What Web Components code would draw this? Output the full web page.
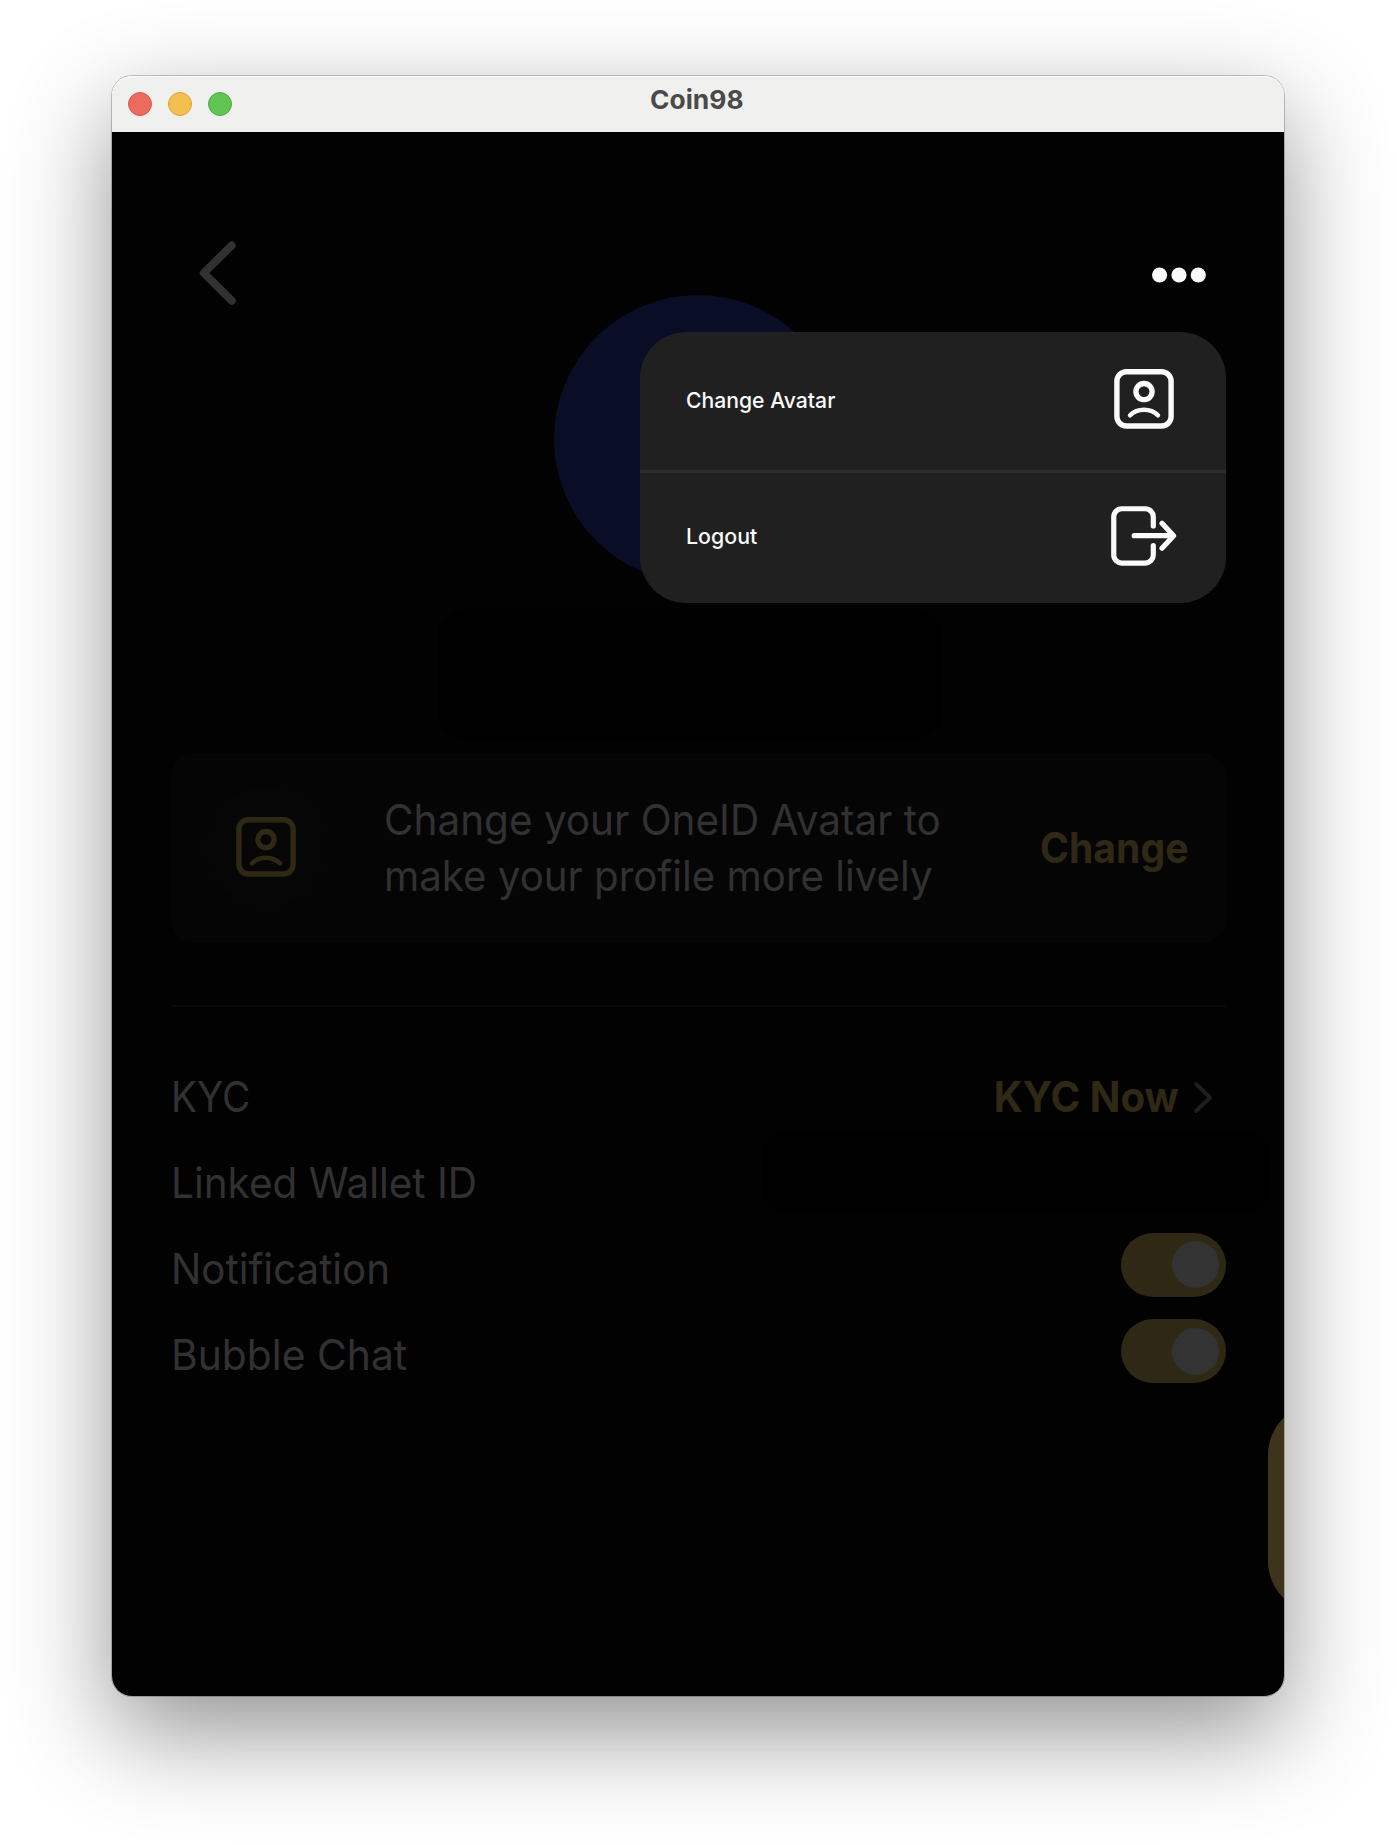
<!DOCTYPE html>
<html lang="en">
<head>
<meta charset="utf-8">
<title>Coin98</title>
<style>
html,body{margin:0;background:#fff}
body{width:1396px;height:1844px;overflow:hidden;display:flex;flex-direction:column;font-family:Inter,"Liberation Sans",sans-serif}
</style>
</head>
<body>
<app-window heading="Coin98">
  <profile-page></profile-page>
  <context-menu slot="overlay">
    <menu-entry icon="avatar"><fit-text sx=".962">Change Avatar</fit-text></menu-entry>
    <menu-entry icon="logout"><fit-text sx=".972">Logout</fit-text></menu-entry>
  </context-menu>
</app-window>
<script>
const define = (name, html, setup) => {
  const tpl = document.createElement('template');
  tpl.innerHTML = html;
  customElements.define(name, class extends HTMLElement {
    constructor() {
      super();
      this.attachShadow({mode: 'open'}).appendChild(tpl.content.cloneNode(true));
    }
    connectedCallback() { if (setup) setup(this, this.shadowRoot); }
  });
};

// name: [width, height, svg body]
const ICONS = {
  back: [44, 64, '<path d="M35.7 4.500L7.800 32l27.900 27.700" stroke-width="8"/>'],
  next: [20, 34, '<path d="M4 4l14 13.500L4 31" stroke-width="4"/>'],
  dots: [50, 16, '<g fill="currentColor" stroke="none"><circle cx="5.600" cy="8" r="7.600"/><circle cx="25" cy="8" r="7.600"/><circle cx="44.300" cy="8" r="7.600"/></g>'],
  avatar: [60, 60, '<rect x="2.900" y="2.750" width="54.200" height="54.300" rx="9.500" stroke-width="5.400"/><circle cx="30" cy="22.600" r="8.100" stroke-width="5.300"/><path d="M16 46.400Q21.500 40.800 30 40.800T44 46.400" stroke-width="4.400"/>'],
  logout: [68, 60, '<path d="M42.300 20V10.750a8 8 0 0 0-8-8H10.750a8 8 0 0 0-8 8v38.300a8 8 0 0 0 8 8H34.300a8 8 0 0 0 8-8V39.500M23.200 29.700H61.500M51 17.300L62.600 29.700 51 42.200" stroke-width="5.200"/>']
};

// Text condensed horizontally by the "sx" factor, anchored at "from".
define('fit-text', `<style>:host{display:inline-block;white-space:nowrap}</style><slot></slot>`, el => {
  el.style.transform = `scaleX(${el.getAttribute('sx') || 1})`;
  el.style.transformOrigin = el.getAttribute('from') || 'left';
});

define('app-icon', `<style>
  :host{display:block;flex:none}
  svg{display:block;overflow:visible;fill:none;stroke:currentColor;stroke-linecap:round;stroke-linejoin:round}
</style><svg></svg>`, (el, root) => {
  const [w, h, body] = ICONS[el.getAttribute('name')];
  const svg = root.querySelector('svg');
  svg.setAttribute('width', w);
  svg.setAttribute('height', h);
  svg.setAttribute('viewBox', `0 0 ${w} ${h}`);
  svg.innerHTML = body;
});

define('app-window', `<style>
  :host{display:flex;flex-direction:column;position:relative;box-sizing:border-box;flex:none;width:1172px;height:1620px;margin:76px 112px 0;border-radius:20px;
    box-shadow:0 0 0 1px rgba(0,0,0,.22),0 36px 100px rgba(0,0,0,.43)}
  header{display:grid;grid-template-columns:1fr auto 1fr;align-items:center;height:56px;padding:0 16px;background:#f0f0ee;border-radius:20px 20px 0 0;box-shadow:inset 0 1px 0 #fafafa;box-sizing:border-box}
  .lights{display:flex;gap:16px}
  i{width:24px;height:24px;border-radius:50%;box-sizing:border-box;border:1px solid}
  .r{background:#ec6a5e;border-color:#d65a4e}.y{background:#f4bf4f;border-color:#d9a53c}.g{background:#61c554;border-color:#52a843}
  h1{margin:0 3px 8px 0;font-size:26px;line-height:32px;font-weight:700;color:#4a4a4a}
  main{flex:1;display:flex;flex-direction:column;background:#020202;border-radius:0 0 20px 20px;overflow:hidden;position:relative}
  .bubble{position:absolute;left:1155.500px;top:1271px;width:120px;height:210px;border-radius:52px;background:#3e341b}
</style>
<header><div class="lights"><i class="r"></i><i class="y"></i><i class="g"></i></div><h1><fit-text sx="1.015" class="t"></fit-text></h1><span></span></header>
<main><slot></slot><div class="bubble"></div></main>
<slot name="overlay"></slot>`, (el, root) => {
  root.querySelector('.t').textContent = el.getAttribute('heading');
});

define('context-menu', `<style>
  :host{position:absolute;left:528px;top:256px;width:586px;height:271px;display:flex;flex-direction:column;background:#202020;border-radius:46px;overflow:hidden}
</style><slot></slot>`);

define('menu-entry', `<style>
  :host{display:flex;align-items:center;justify-content:space-between;box-sizing:border-box;flex:none;height:137.500px;padding:0 52px 3.500px 45.700px;color:#fafafa;font-size:22px;font-weight:500;line-height:28px}
  :host(:last-child){height:133.500px;padding:0 47px 1px 45.700px;background:linear-gradient(#2d2d2d 3px,transparent 3px)}
  span{padding-top:1px}
</style><span><slot></slot></span>`, (el, root) => {
  const icon = document.createElement('template');
  icon.innerHTML = `<app-icon name="${el.getAttribute('icon')}"></app-icon>`;
  root.appendChild(icon.content);
});

define('toggle-switch', `<style>
  :host{display:flex;align-items:center;justify-content:flex-end;box-sizing:border-box;width:105.500px;height:64.600px;padding-right:7.500px;border-radius:33px;background:#2f2814;margin-bottom:8.500px}
  i{width:47px;height:47px;border-radius:50%;background:#333}
</style><i></i>`);

define('setting-row', `<style>
  :host{display:flex;align-items:center;justify-content:space-between;height:86.250px;line-height:86px}
</style><slot></slot><slot name="value"></slot>`);

define('avatar-card', `<style>
  :host{display:flex;align-items:center;box-sizing:border-box;height:189.500px;padding:0 37.500px 0 35px;border-radius:24px;background:#050505}
  .ic{display:flex;align-items:center;justify-content:center;width:120px;height:120px;margin-bottom:1.500px;border-radius:50%;background:#060606;color:#2f2814}
  p{margin:0 0 0 58px;flex:1;line-height:55.300px}
  b{font-weight:700;color:#2f2814}
</style><div class="ic"><app-icon name="avatar"></app-icon></div>
<p><fit-text sx=".95">Change your OneID Avatar to</fit-text><br><fit-text sx=".945">make your profile more lively</fit-text></p>
<b><fit-text sx=".92" from="right">Change</fit-text></b>`);

define('profile-page', `<style>
  :host{display:flex;flex-direction:column;box-sizing:border-box;padding:0 58px 0 59px;color:#313131;font-size:42.600px}
  nav{display:flex;justify-content:space-between;box-sizing:border-box;height:163px;padding:109px 22px 0 25px}
  .dots{color:#fafafa;padding-top:26px}
  .avatar{width:288px;height:288px;border-radius:50%;background:#090d26;margin-left:383px}
  .name{width:504px;height:130px;border-radius:28px;background:#000;margin:26px 0 14px 266px}
  hr{border:0;height:2px;background:#080808;margin:62.500px 0 46.500px;width:100%}
  .kyc{display:flex;align-items:center;gap:13px;font-weight:700;color:#2f2814;margin-right:14px}
  .kyc app-icon{color:#1e1e1e}
  .wallet{width:506px;height:82px;border-radius:28px;background:#000;margin:0 -43px 21px 0}
</style>
<nav><app-icon name="back"></app-icon><app-icon class="dots" name="dots"></app-icon></nav>
<div class="avatar"></div>
<div class="name"></div>
<avatar-card></avatar-card>
<hr>
<setting-row><fit-text sx=".91">KYC</fit-text><div class="kyc" slot="value"><fit-text sx=".945" from="right">KYC Now</fit-text><app-icon name="next"></app-icon></div></setting-row>
<setting-row><fit-text sx=".95">Linked Wallet ID</fit-text><div class="wallet" slot="value"></div></setting-row>
<setting-row><fit-text sx=".946">Notification</fit-text><toggle-switch slot="value"></toggle-switch></setting-row>
<setting-row><fit-text sx=".958">Bubble Chat</fit-text><toggle-switch slot="value"></toggle-switch></setting-row>`);
</script>
</body>
</html>
